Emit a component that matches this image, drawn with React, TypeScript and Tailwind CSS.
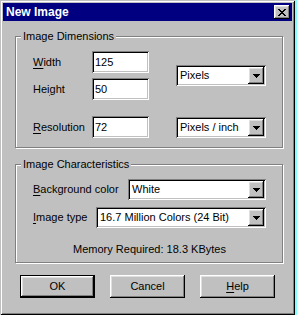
import { ReactNode } from "react";

const raised =
  "shadow-[inset_-1px_-1px_#000,inset_1px_1px_#fff,inset_-2px_-2px_#808080,inset_2px_2px_#dfdfdf]";
const sunken =
  "shadow-[inset_1px_1px_#808080,inset_-1px_-1px_#fff,inset_2px_2px_#000,inset_-2px_-2px_#c0c0c0]";

function U({ children }: { children: ReactNode }) {
  return <span className="underline underline-offset-[2px]">{children}</span>;
}

function Field({ value }: { value: string }) {
  return (
    <div className={`w-[57px] h-[22px] bg-white ${sunken} flex items-center pl-[3px] pt-[1px]`}>
      {value}
    </div>
  );
}

function Combo({ value, width }: { value: string; width: string }) {
  return (
    <div className={`${width} h-[21px] bg-white ${sunken} flex items-center p-[2px]`}>
      <span className="flex-1 pl-[2px]">{value}</span>
      <div className={`w-[16px] h-[17px] bg-[#c0c0c0] ${raised} flex items-center justify-center`}>
        <svg width="7" height="4" viewBox="0 0 7 4" className="block" shapeRendering="crispEdges">
          <path d="M0 0h7v1H0zM1 1h5v1H1zM2 2h3v1H2zM3 3h1v1H3z" fill="#000" />
        </svg>
      </div>
    </div>
  );
}

function Group({ title, children, className }: { title: string; children: ReactNode; className: string }) {
  return (
    <div
      className={`w-[268px] border border-[#808080] shadow-[inset_1px_1px_#fff,1px_1px_#fff] flex flex-col ${className}`}
    >
      <span className="-mt-[7px] -ml-[12px] self-start bg-[#c0c0c0] px-[2px] leading-[13px]">{title}</span>
      {children}
    </div>
  );
}

function Button({ children, main }: { children: ReactNode; main?: boolean }) {
  return (
    <div className={`w-[75px] h-[23px] ${main ? "border border-black" : ""}`}>
      <div className={`w-full h-full bg-[#c0c0c0] ${raised} flex items-center justify-center`}>{children}</div>
    </div>
  );
}

export default function App() {
  return (
    <div className="w-[297px] h-[315px] bg-[#7fffff] font-['Liberation_Sans',Arial,sans-serif] text-[11px] text-black">
      <div
        className={`w-[295px] h-[315px] bg-[#c0c0c0] p-[3px] flex flex-col shadow-[inset_1px_1px_#c0c0c0,inset_-1px_-1px_#000,inset_2px_2px_#fff,inset_-2px_-2px_#808080]`}
      >
        <div className="h-[18px] bg-[#000080] flex items-center justify-between pl-[3px] pr-[2px]">
          <span className="text-white font-bold text-[12px]">New Image</span>
          <div className={`w-[16px] h-[14px] bg-[#c0c0c0] ${raised} flex items-center justify-center`}>
            <svg width="8" height="7" viewBox="0 0 8 7" className="block" shapeRendering="crispEdges">
              <path
                d="M0 0h2v1H0zM6 0h2v1H6zM1 1h2v1H1zM5 1h2v1H5zM2 2h4v1H2zM3 3h2v1H3zM2 4h4v1H2zM1 5h2v1H1zM5 5h2v1H5zM0 6h2v1H0zM6 6h2v1H6z"
                fill="#000"
              />
            </svg>
          </div>
        </div>

        <Group title="Image Dimensions" className="ml-[12px] mt-[15px] pl-[17px] pb-[9px]">
          <div className="mt-[8px] flex items-center">
            <div className="flex flex-col gap-[5px]">
              <div className="flex items-center">
                <span className="w-[59px]">
                  <U>W</U>idth
                </span>
                <Field value="125" />
              </div>
              <div className="flex items-center">
                <span className="w-[59px]">
                  Hei<U>g</U>ht
                </span>
                <Field value="50" />
              </div>
            </div>
            <div className="ml-[27px]">
              <Combo value="Pixels" width="w-[90px]" />
            </div>
          </div>
          <div className="mt-[16px] flex items-center">
            <span className="w-[59px]">
              <U>R</U>esolution
            </span>
            <Field value="72" />
            <div className="ml-[27px] mt-[1px]">
              <Combo value="Pixels / inch" width="w-[90px]" />
            </div>
          </div>
        </Group>

        <Group title="Image Characteristics" className="ml-[12px] mt-[16px] pl-[17px] pr-[16px] pb-[6px]">
          <div className="mt-[8px] flex items-center justify-between">
            <span>
              <U>B</U>ackground color
            </span>
            <Combo value="White" width="w-[138px]" />
          </div>
          <div className="mt-[7px] flex items-center justify-between">
            <span>
              <U>I</U>mage type
            </span>
            <Combo value="16.7 Million Colors (24 Bit)" width="w-[170px]" />
          </div>
          <div className="mt-[15px] leading-[13px] text-center">Memory Required: 18.3 KBytes</div>
        </Group>

        <div className="mt-[12px] ml-[17px] flex gap-[15px]">
          <Button main>OK</Button>
          <Button>Cancel</Button>
          <Button>
            <span>
              <U>H</U>elp
            </span>
          </Button>
        </div>
      </div>
    </div>
  );
}
